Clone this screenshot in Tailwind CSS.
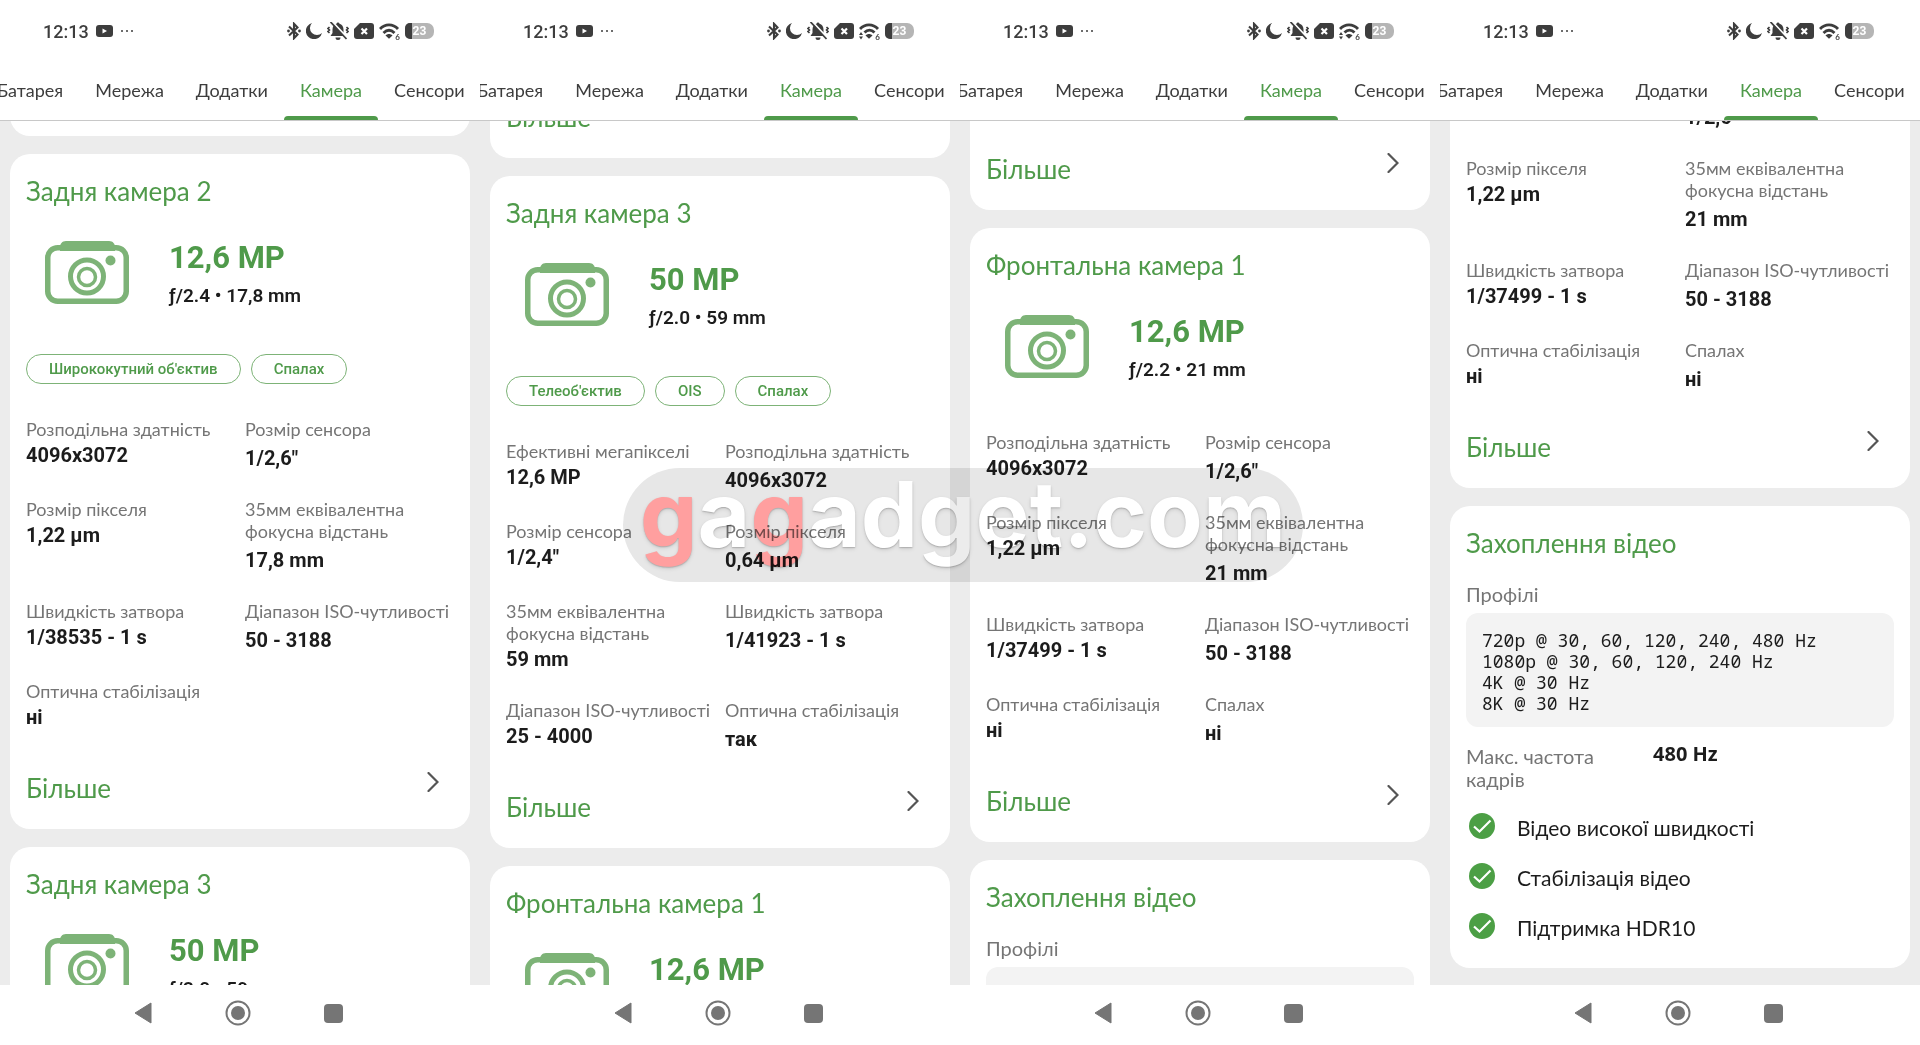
<!DOCTYPE html>
<html lang="uk">
<head>
  <meta charset="UTF-8" />
  <meta name="viewport" content="width=device-width, initial-scale=1.0" />
  <title>Камера | Характеристики</title>
  <script src="https://cdn.jsdelivr.net/npm/@tailwindcss/browser@4"></script>
</head>
<body class="bg-white font-['Lato','Open_Sans',sans-serif] text-[#1c1c1c]">
  <!-- Shared icons -->
  <svg class="hidden">
    <symbol id="icon-camera" viewBox="0 0 84 63">
      <path d="M15 6c0-3 2-6 6-6h43c4 0 6 3 6 6v4H15z" fill="currentColor" />
      <rect x="2.75" y="6.75" width="78.5" height="53.5" rx="10" fill="none" stroke="currentColor" stroke-width="5.5" />
      <circle cx="42" cy="35.5" r="16.5" fill="none" stroke="currentColor" stroke-width="5" />
      <circle cx="42" cy="36" r="8.5" fill="none" stroke="currentColor" stroke-width="3.5" />
      <circle cx="65.5" cy="19.5" r="5" fill="currentColor" />
    </symbol>
    <symbol id="icon-bluetooth" viewBox="0 0 14 18">
      <path d="M2 4.500l8.500 8L7 16.200V1.800l3.500 3.700L2 13.500" fill="none" stroke="currentColor" stroke-width="2.100" />
      <circle cx="1.500" cy="9" r="1.400" fill="currentColor" />
      <circle cx="12.500" cy="9" r="1.400" fill="currentColor" />
    </symbol>
    <symbol id="icon-moon" viewBox="0 0 16 16">
      <path d="M6 0a8.200 8.200 0 1 0 10 10A7 7 0 0 1 6 0z" fill="currentColor" />
    </symbol>
    <symbol id="icon-muted" viewBox="0 0 22 18">
      <path d="M11 .5a1.500 1.500 0 0 1 1.500 1.200C15 2.500 16.500 4.500 16.500 7.500V11l2 3h-15l2-3V7.500c0-3 1.500-5 4-5.800A1.500 1.500 0 0 1 11 .5zM8.500 15.500h5a2.500 2.500 0 0 1-5 0z" fill="currentColor" />
      <path d="M2.500 5L1 6.500l1.500 1.500L1 9.500 2.500 11M19.500 5L21 6.500 19.500 8 21 9.500 19.500 11" fill="none" stroke="currentColor" stroke-width="1.600" />
      <path d="M5.500 0l15 16" stroke="#fff" stroke-width="2" />
      <path d="M3.500 0l16 17" stroke="currentColor" stroke-width="1.800" />
    </symbol>
    <symbol id="icon-nosim" viewBox="0 0 20 16">
      <path d="M6 0h11a3 3 0 0 1 3 3v10a3 3 0 0 1-3 3H3a3 3 0 0 1-3-3V6z" fill="currentColor" />
      <path d="M7.500 5.500l5.500 5.500M13 5.500L7.500 11" stroke="#fff" stroke-width="2.200" />
    </symbol>
    <symbol id="icon-wifi" viewBox="0 0 21 17">
      <path d="M1 6c5-5.500 13-5.500 18 0" fill="none" stroke="currentColor" stroke-width="2.800" />
      <path d="M4.500 10c3.500-3.500 7.500-3.500 11 0" fill="none" stroke="currentColor" stroke-width="2.800" />
      <path d="M6.500 12.500c2-2 5-2 7 0l-3.500 3.300z" fill="currentColor" />
    </symbol>
    <symbol id="icon-wifi-active" viewBox="0 0 21 17">
      <path d="M1 6c5-5.500 13-5.500 18 0" fill="none" stroke="currentColor" stroke-width="2.800" />
      <path d="M5.500 9.500c3-3 7-3 10 0" fill="none" stroke="currentColor" stroke-width="2.800" />
      <path d="M6.500 12.500c2-2 5-2 7 0l-3.500 3.300z" fill="currentColor" />
      <path d="M0 12h4L2 9zM0 13.500h4l-2 3z" fill="currentColor" />
    </symbol>
    <symbol id="icon-youtube" viewBox="0 0 17 12">
      <rect width="17" height="12" rx="3" fill="currentColor" />
      <path d="M6.500 3.500v5l4.500-2.500z" fill="#fff" />
    </symbol>
    <symbol id="icon-chevron" viewBox="0 0 12 20">
      <path d="M1.500 1l9 9-9 9" fill="none" stroke="currentColor" stroke-width="2.200" stroke-linecap="round" />
    </symbol>
    <symbol id="icon-check" viewBox="0 0 26 26">
      <circle cx="13" cy="13" r="13" fill="currentColor" />
      <path d="M5 13.500l5.500 5L21.500 7.500" fill="none" stroke="#fff" stroke-width="2.200" />
    </symbol>
  </svg>

  <main id="phones" class="relative grid grid-cols-4 h-screen overflow-hidden"></main>

  <script>
    const tabs = ["Батарея", "Мережа", "Додатки", "Камера", "Сенсори"];

    const rear2 = {
      title: "Задня камера 2", mp: "12,6 MP", lens: "ƒ/2.4 • 17,8 mm",
      chips: ["Ширококутний об'єктив", "Спалах"],
      specs: [
        ["Розподільна здатність", "4096x3072"], ["Розмір сенсора", "1/2,6\""],
        ["Розмір пікселя", "1,22 µm"], ["35мм еквівалентна фокусна відстань", "17,8 mm"],
        ["Швидкість затвора", "1/38535 - 1 s"], ["Діапазон ISO-чутливості", "50 - 3188"],
        ["Оптична стабілізація", "ні"]
      ]
    };
    const rear3 = {
      title: "Задня камера 3", mp: "50 MP", lens: "ƒ/2.0 • 59 mm",
      chips: ["Телеоб'єктив", "OIS", "Спалах"],
      specs: [
        ["Ефективні мегапікселі", "12,6 MP"], ["Розподільна здатність", "4096x3072"],
        ["Розмір сенсора", "1/2,4\""], ["Розмір пікселя", "0,64 µm"],
        ["35мм еквівалентна фокусна відстань", "59 mm"], ["Швидкість затвора", "1/41923 - 1 s"],
        ["Діапазон ISO-чутливості", "25 - 4000"], ["Оптична стабілізація", "так"]
      ]
    };
    const front1 = {
      title: "Фронтальна камера 1", mp: "12,6 MP", lens: "ƒ/2.2 • 21 mm",
      chips: [],
      specs: [
        ["Розподільна здатність", "4096x3072"], ["Розмір сенсора", "1/2,6\""],
        ["Розмір пікселя", "1,22 µm"], ["35мм еквівалентна фокусна відстань", "21 mm"],
        ["Швидкість затвора", "1/37499 - 1 s"], ["Діапазон ISO-чутливості", "50 - 3188"],
        ["Оптична стабілізація", "ні"], ["Спалах", "ні"]
      ]
    };

    const icon = (name, cls) => `<svg class="${cls}"><use href="#icon-${name}" /></svg>`;

    const more = () => `
      <a href="#" class="flex justify-between items-start pr-[15px]">
        <span class="text-[26px] leading-8 text-[#4f9a4a]">Більше</span>
        ${icon("chevron", "w-3 h-5 text-[#555]")}
      </a>`;

    const card = (inner, top = "pt-[21px]") => `<section class="bg-white rounded-[20px] px-4 ${top} pb-[25px]">${inner}</section>`;

    const title = (text) => `<h2 class="text-[26px] leading-8 text-[#4f9a4a]">${text}</h2>`;

    // the right column keeps its values a little lower than the left one
    const cameraCard = (c) => card(`
      ${title(c.title)}
      <div class="flex items-center pl-[19px] mt-[34px] h-[63px]">
        ${icon("camera", "w-[84px] h-[63px] text-[#7db377]")}
        <div class="ml-10 font-['Roboto',sans-serif]">
          <p class="pt-[2px] text-[31px] leading-9 font-bold text-[#4f9a4a]">${c.mp}</p>
          <p class="mt-2 text-[19px] leading-6 font-semibold">${c.lens}</p>
        </div>
      </div>
      ${c.chips.length ? `<ul class="flex gap-[10px] mt-[50px]">${c.chips.map(t => `
        <li class="h-[30px] px-[22px] rounded-full border border-[#7db377] text-[15px] leading-7 font-medium font-['Roboto',sans-serif] text-[#4f9a4a]">${t}</li>`).join("")}</ul>` : ""}
      <dl class="grid grid-cols-[219px_1fr] gap-y-7 ${c.chips.length ? "mt-[34px]" : "mt-[53px]"}">
        ${c.specs.map(([k, v], i) => `
        <div class="min-h-[52px]">
          <dt class="text-[18px] leading-[22px] text-[#757575] max-w-[215px]">${k}</dt>
          <dd class="text-[20px] leading-6 font-bold font-['Roboto',sans-serif] ${i % 2 ? "mt-[6px]" : "mt-[3px]"}">${v}</dd>
        </div>`).join("")}
      </dl>
      <div class="mt-10">${more()}</div>`);

    const tailCard = () => card(more(), "pt-20");

    const videoCard = () => card(`
      ${title("Захоплення відео")}
      <p class="mt-6 text-[20px] leading-[23px] text-[#757575]">Профілі</p>
      <pre class="mt-[7px] rounded-xl bg-[#f3f3f3] px-4 pt-[17px] pb-[13px] font-['Noto_Sans_Mono','Droid_Sans_Mono','DejaVu_Sans_Mono',monospace] text-[18px] leading-[21px]">720p @ 30, 60, 120, 240, 480 Hz
1080p @ 30, 60, 120, 240 Hz
4K @ 30 Hz
8K @ 30 Hz</pre>
      <dl class="grid grid-cols-[187px_1fr] mt-[18px]">
        <dt class="text-[20px] leading-[23px] text-[#757575] max-w-[150px]">Макс. частота кадрів</dt>
        <dd class="text-[20px] leading-[18px] font-bold font-['Noto_Sans',sans-serif]">480 Hz</dd>
      </dl>
      <ul class="mt-[22px] pb-1 flex flex-col gap-6">
        ${["Відео високої швидкості", "Стабілізація відео", "Підтримка HDR10"].map(t => `
        <li class="flex gap-[22px] pl-[3px]">${icon("check", "w-[26px] h-[26px] text-[#4c9f45]")}<span class="pt-1 text-[21px] leading-[22px]">${t}</span></li>`).join("")}
      </ul>`);

    // scroll is the distance each list is scrolled past the tab bar
    const phones = [
      { scroll: "-mt-[122px]", wifi: "wifi", cards: [tailCard(), cameraCard(rear2), cameraCard(rear3)] },
      { scroll: "-mt-[100px]", wifi: "wifi-active", cards: [tailCard(), cameraCard(rear3), cameraCard(front1)] },
      { scroll: "-mt-[48px]", wifi: "wifi-active", cards: [tailCard(), cameraCard(front1), videoCard()] },
      { scroll: "-mt-[247px]", wifi: "wifi", cards: [cameraCard(front1), videoCard()] }
    ];

    const statusBar = (wifi) => `
      <div class="h-[60px] shrink-0 flex items-center pl-[43px] pr-[46px] pt-[2px] text-[#3d3d3d]">
        <span class="font-['Roboto',sans-serif] text-[18px] font-medium">12:13</span>
        ${icon("youtube", "ml-[7px] w-[17px] h-3")}
        <span class="ml-2 flex gap-[3px]"><i class="size-[2px] rounded-full bg-[#3d3d3d]"></i><i class="size-[2px] rounded-full bg-[#3d3d3d]"></i><i class="size-[2px] rounded-full bg-[#3d3d3d]"></i></span>
        <div class="ml-auto flex items-center gap-[5px]">
          ${icon("bluetooth", "w-[14px] h-[18px]")}
          ${icon("moon", "size-4")}
          ${icon("muted", "w-[22px] h-[18px]")}
          ${icon("nosim", "w-5 h-4")}
          <span class="relative flex">${icon(wifi, "w-[21px] h-[17px]")}<b class="absolute -bottom-px right-0 bg-white text-[8px] leading-[7px]">6</b></span>
          <span class="relative w-[29px] h-4 rounded-l-[5px] rounded-r-[7px] overflow-hidden bg-[#b5b5b5] text-center text-[12px] leading-4 font-bold text-white font-['Roboto',sans-serif]"><i class="absolute left-0 top-0 w-[7px] h-4 bg-[#3d3d3d]"></i><span class="relative">23</span></span>
        </div>
      </div>`;

    const tabBar = `
      <nav class="h-[61px] shrink-0 flex -ml-[19px] border-b border-[#c8c8c8] overflow-hidden">
        ${tabs.map(t => `<a href="#" class="px-4 pt-[19px] text-[18px] leading-[22px] ${t === "Камера" ? "relative text-[#4f9a4a] after:absolute after:inset-x-0 after:bottom-0 after:h-1 after:rounded-t after:bg-[#4f9a4a]" : "text-[#3d3d3d]"}">${t}</a>`).join("")}
      </nav>`;

    const navBar = `
      <div class="h-[60px] shrink-0 flex items-center justify-center gap-[73px] bg-white pb-1 pr-1 text-[#757575]">
        <button aria-label="Назад"><svg class="w-[18px] h-[22px]" viewBox="0 0 18 22"><path d="M17 1v20L1 11z" fill="currentColor" stroke="currentColor" stroke-linejoin="round" /></svg></button>
        <button aria-label="Додому"><svg class="w-[26px] h-[26px]" viewBox="0 0 26 26"><circle cx="13" cy="13" r="11.5" fill="none" stroke="currentColor" stroke-width="2" /><circle cx="13" cy="13" r="7" fill="currentColor" /></svg></button>
        <button aria-label="Останні" class="size-[19px] rounded bg-[#757575]"></button>
      </div>`;

    document.getElementById("phones").innerHTML = phones.map(p => `
      <article class="flex flex-col h-screen min-w-0 overflow-hidden bg-white">
        ${statusBar(p.wifi)}
        ${tabBar}
        <div class="flex-1 min-h-0 overflow-hidden bg-[#ececec] px-[10px]">
          <div class="flex flex-col gap-[18px] ${p.scroll}">${p.cards.join("")}</div>
        </div>
        ${navBar}
      </article>`).join("") + `
      <div class="absolute inset-0 flex items-center justify-center pt-1 pl-[6px] mix-blend-multiply pointer-events-none">
        <div class="w-[680px] h-[114px] rounded-full bg-[#e7e7e7] text-center text-[91px] leading-[92px] font-bold font-['Inter',sans-serif] text-white text-shadow-md">
          <span class="text-[#ff9f9f]">g</span>a<span class="text-[#ff9f9f]">g</span>adget.com
        </div>
      </div>`;
  </script>
</body>
</html>
